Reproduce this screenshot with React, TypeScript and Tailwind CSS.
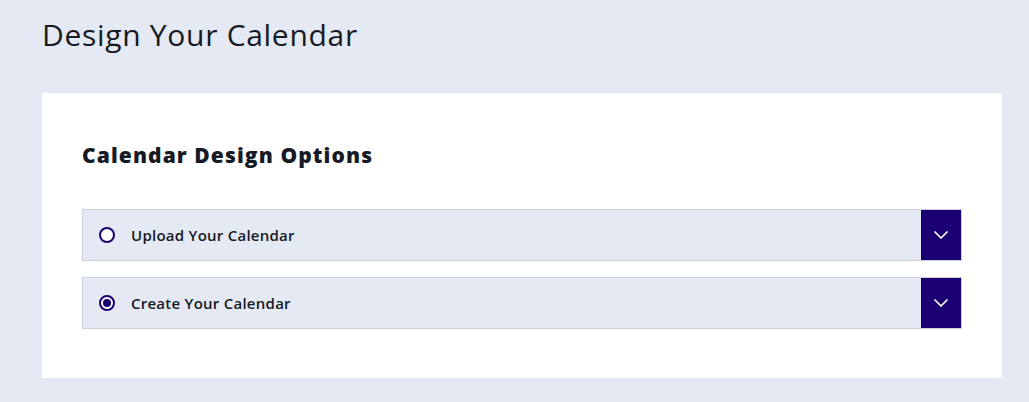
import { ChevronDown } from "lucide-react";

const options = [
  { id: "upload", label: "Upload Your Calendar", selected: false },
  { id: "create", label: "Create Your Calendar", selected: true },
];

export default function App() {
  return (
    <div className="min-h-screen bg-[#e5e9f4] px-[42px] pt-[15px] pb-[24px] font-['Open_Sans',sans-serif] text-[#161a24]">
      <h1 className="text-[30px] font-normal leading-[40px] tracking-[0.7px]">Design Your Calendar</h1>

      {/* Card */}
      <div className="mt-[38px] w-[960px] rounded-[2px] bg-white px-[40px] pt-[48px] pb-[49px]">
        <h2 className="text-[21px] font-extrabold leading-[28px] tracking-[1.1px]">Calendar Design Options</h2>

        <div className="mt-[40px] flex flex-col gap-[16px]">
          {options.map((opt) => (
            <div
              key={opt.id}
              className="flex h-[52px] items-stretch border border-[#cdd1dc] bg-[#e5e9f4]"
            >
              <div className="flex flex-1 items-center pl-[16px]">
                <span className="flex h-[16px] w-[16px] items-center justify-center rounded-full border-2 border-[#1a0073] bg-white">
                  {opt.selected && <span className="h-[8px] w-[8px] rounded-full bg-[#1a0073]" />}
                </span>
                <span className="ml-[16px] text-[15px] font-semibold tracking-[0.25px]">{opt.label}</span>
              </div>
              <button className="flex w-[40px] items-center justify-center bg-[#1a0073]">
                <ChevronDown className="h-[24px] w-[24px] text-white" strokeWidth={1.75} />
              </button>
            </div>
          ))}
        </div>
      </div>
    </div>
  );
}
